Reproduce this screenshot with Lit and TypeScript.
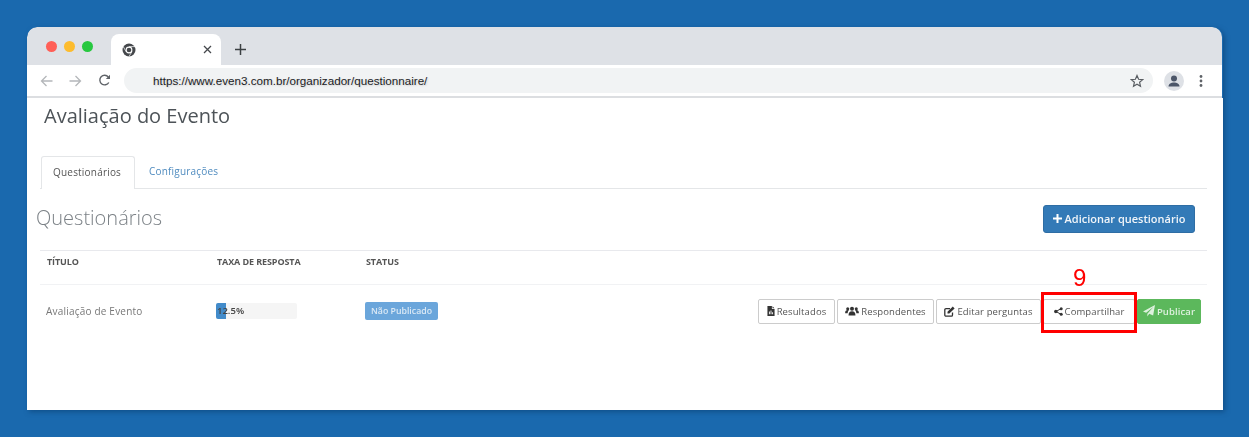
import { LitElement, html, css, svg } from "lit";
import { customElement } from "lit/decorators.js";

const fileIcon = svg`<svg class="ic" width="8" height="10" viewBox="0 0 9 11"><path fill="#333" d="M0.5 0H5.500V3.200H8.500V11H0.500Z"/><path fill="#333" d="M6.200 0.200L8.400 2.500H6.200Z"/><path fill="#fff" d="M2.200 6.200h1v3h-1zM4 5h1v4.200h-1zM5.800 7h1v2.200h-1z"/></svg>`;
const usersIcon = svg`<svg class="ic" width="14" height="10" viewBox="0 0 15 11"><g fill="#333"><circle cx="7.500" cy="3" r="2.200"/><path d="M3.700 10.500c0-3.500 1.300-4.800 3.800-4.800s3.800 1.300 3.800 4.800z"/><circle cx="2.800" cy="3" r="1.700"/><path d="M0 8V7c0-1.500.9-2.600 2.800-2.600.5 0 .9.100 1.200.3-.8.700-1.200 1.800-1.300 3.300z"/><circle cx="12.200" cy="3" r="1.700"/><path d="M15 8V7c0-1.500-.9-2.600-2.800-2.600-.5 0-.9.100-1.200.3.800.7 1.200 1.800 1.300 3.300z"/></g></svg>`;
const editIcon = svg`<svg class="ic" width="11" height="11" viewBox="0 0 11 11"><path fill="none" stroke="#333" stroke-width="1.300" d="M8.500 6.500V9a1.200 1.200 0 0 1-1.200 1.200H2A1.200 1.200 0 0 1 .8 9V3.800A1.200 1.200 0 0 1 2 2.600h4"/><path fill="#333" d="M3.500 5.800L8.800 .6l1.800 1.800L5.300 7.600H3.500z"/></svg>`;
const shareIcon = svg`<svg class="ic" width="9" height="9" viewBox="0 0 9 9"><path stroke="#333" stroke-width="1" fill="none" d="M7 1.700L2 4.500L7 7.300"/><g fill="#333"><circle cx="1.800" cy="4.500" r="1.700"/><circle cx="7.200" cy="1.700" r="1.500"/><circle cx="7.200" cy="7.300" r="1.500"/></g></svg>`;
const planeIcon = svg`<svg class="ic" width="12" height="12" viewBox="0 0 11 11"><path fill="#fff" opacity=".8" d="M11 0L9.300 9.600L5.700 8L4 10.500V8L9.500 1.800L2.900 7.200L0 6Z"/></svg>`;

@customElement("app-root")
export class AppRoot extends LitElement {
  static styles = css`
    :host {
      display: block;
      height: 437px;
      box-sizing: border-box;
      padding: 27px 26px 27px 27px;
      background: #1a69ae;
      font-family: "Open Sans", sans-serif;
      overflow: hidden;
    }
    .window {
      height: 383px;
      border-radius: 10px 10px 0 0;
      box-shadow: 2px 2px 5px rgba(10, 60, 110, 0.55);
      display: flex;
      flex-direction: column;
      overflow: hidden;
    }
    .tabbar {
      height: 38px;
      flex: none;
      background: #dee1e6;
      display: flex;
      align-items: flex-end;
      padding-left: 19px;
      margin-right: 1px;
      border-radius: 10px 10px 0 0;
    }
    .lights {
      display: flex;
      gap: 7px;
      align-self: flex-start;
      margin-top: 14px;
      width: 65px;
    }
    .lights i {
      width: 11px;
      height: 11px;
      border-radius: 50%;
    }
    .red { background: #ff5f57; }
    .yellow { background: #fdbc2e; }
    .green { background: #28c840; }
    .tab {
      width: 110px;
      height: 31px;
      background: #fff;
      border-radius: 8px 8px 0 0;
      display: flex;
      align-items: center;
      justify-content: space-between;
      padding: 0 9px 0 11px;
      box-sizing: border-box;
    }
    .newtab {
      margin: 0 0 10px 14px;
      display: block;
    }
    .toolbar {
      height: 31px;
      flex: none;
      background: #fff;
      display: flex;
      align-items: center;
      padding-left: 13px;
      border-bottom: 2px solid #dcdee1;
      margin-right: 1px;
    }
    .nav {
      display: flex;
      gap: 16px;
      align-items: center;
      width: 84px;
    }
    .omni {
      width: 1029px;
      height: 25px;
      background: #f1f3f4;
      border-radius: 13px;
      display: flex;
      align-items: center;
      justify-content: space-between;
      padding: 0 9px 0 29px;
      box-sizing: border-box;
      font: 11.650px "Liberation Sans", Arial, sans-serif;
      color: #202124;
      text-shadow: 1px 1px 2px rgba(0,0,0,.15);
    }
    .avatar { margin-left: 11px; display: block; }
    .dots { margin-left: 15px; display: block; }
    .page {
      flex: 1;
      background: #fff;
      padding: 0 16px 0 13px;
      position: relative;
      filter: blur(0.35px);
    }
    h1 {
      margin: 4px 0 0 4px;
      font-size: 20px;
      line-height: 27px;
      font-weight: 400;
      color: #4d5358;
    }
    .tabs {
      margin-top: 27px;
      display: flex;
      border-bottom: 1px solid #e4e6e8;
      height: 32px;
      padding-left: 1px;
    }
    .tabs span {
      font-size: 10px;
      line-height: 30px;
      letter-spacing: 0.2px;
      padding: 0 12px 0 11px;
    }
    .tabs .on {
      width: 94px;
      box-sizing: border-box;
      height: 33px;
      background: #fff;
      color: #555;
      border: 1px solid #e4e6e8;
      border-bottom: none;
      border-radius: 3px 3px 0 0;
    }
    .tabs .off { color: #4f8bbf; margin-left: 3px; }
    .head {
      display: flex;
      justify-content: space-between;
      align-items: center;
      margin: 16px 12px 0 -4px;
      height: 28px;
    }
    h2 {
      margin: 0 0 4px;
      font-size: 20px;
      font-weight: 300;
      color: #7b8186;
    }
    .add {
      height: 28px;
      width: 152px;
      box-sizing: border-box;
      background: #337ab7;
      border: 1px solid #2e6da4;
      border-radius: 3px;
      color: #f1f5f9;
      font: 600 11px/24px "Open Sans", sans-serif;
      display: flex;
      align-items: center;
      justify-content: center;
      gap: 3px;
      padding: 0 0 1px;
    }
    .table { margin-top: 17px; }
    .row {
      display: grid;
      grid-template-columns: 170px 149px 1fr auto;
      padding: 0 6px;
      align-items: center;
    }
    .hdr {
      height: 35px;
      box-sizing: border-box;
      border-top: 1px solid #e8e9ed;
      border-bottom: 1px solid #f1f2f4;
      font-size: 9px;
      font-weight: 700;
      letter-spacing: -0.1px;
      color: #555;
      padding: 0 7px 12px;
    }
    .body {
      height: 52px;
      font-size: 10px;
      letter-spacing: 0.2px;
      color: #777;
    }
    .bar {
      width: 81px;
      height: 16px;
      border-radius: 2px;
      background: #f5f5f5;
      position: relative;
      overflow: hidden;
      font-size: 9.500px;
      font-weight: 600;
      line-height: 16px;
      color: #444;
      letter-spacing: 0;
    }
    .fill {
      height: 100%;
      background: #428bca;
    }
    .pct { position: absolute; left: 1px; top: 0; }
    .label {
      display: inline-block;
      background: #6ba6db;
      color: #dbe9f5;
      font-size: 8.750px;
      font-weight: 600;
      line-height: 18px;
      height: 18px;
      padding: 0 6px;
      border-radius: 2px;
      letter-spacing: 0;
    }
    .actions {
      display: flex;
      gap: 2px;
    }
    .btn {
      position: relative;
      height: 25px;
      box-sizing: border-box;
      background: #fff;
      border: 1px solid #ccc;
      border-radius: 2px;
      font: 9.500px "Open Sans", sans-serif;
      letter-spacing: 0.1px;
      color: #555;
      display: flex;
      align-items: center;
      justify-content: center;
      gap: 2px;
      padding: 0;
    }
    .green-btn {
      background: #5cb85c;
      border-color: #5cb85c;
      color: #dff1df;
      font-weight: 600;
    }
    .ic { flex: none; display: block; }
    .mark {
      position: absolute;
      left: -3px;
      top: -8px;
      width: 96px;
      height: 41px;
      box-sizing: border-box;
      border: 3px solid #f00;
    }
    .nine {
      position: absolute;
      left: 29px;
      top: -34px;
      font: 24px/24px "Liberation Sans", Arial, sans-serif;
      color: #f00;
    }
  `;

  render() {
    return html`
      <div class="window">
        <div class="tabbar">
          <div class="lights"><i class="red"></i><i class="yellow"></i><i class="green"></i></div>
          <div class="tab">
            <svg width="14" height="14" viewBox="0 0 14 14">
              <circle cx="7" cy="7" r="6.500" fill="#45484c"/>
              <circle cx="7" cy="7" r="3.400" fill="#fff"/>
              <circle cx="7" cy="7" r="2.300" fill="#45484c"/>
              <path d="M7 3.600H13M4.100 8.700L1.500 4M9.900 8.700L7 13.500" stroke="#fff" stroke-width=".7"/>
            </svg>
            <svg width="9" height="9" viewBox="0 0 9 9"><path d="M1 1L8 8M8 1L1 8" stroke="#45484c" stroke-width="1.300"/></svg>
          </div>
          <svg class="newtab" width="11" height="11" viewBox="0 0 11 11"><path d="M5.500 0V11M0 5.500H11" stroke="#3c4043" stroke-width="1.500"/></svg>
        </div>
        <div class="toolbar">
          <div class="nav">
            <svg width="13" height="12" viewBox="0 0 13 12"><path d="M12.500 6H1.500M6.500 1L1.500 6L6.500 11" fill="none" stroke="#b4b7ba" stroke-width="1.300"/></svg>
            <svg width="13" height="12" viewBox="0 0 13 12"><path d="M.5 6H11.500M6.500 1L11.500 6L6.500 11" fill="none" stroke="#b4b7ba" stroke-width="1.300"/></svg>
            <svg width="13" height="13" viewBox="0 0 13 13"><path d="M10.800 8.500A4.800 4.800 0 1 1 10.300 3" fill="none" stroke="#5f6368" stroke-width="1.400"/><path d="M12 .8V5H7.800Z" fill="#5f6368"/></svg>
          </div>
          <div class="omni">
            <span>https://www.even3.com.br/organizador/questionnaire/</span>
            <svg width="14" height="14" viewBox="0 0 14 14"><path d="M7 1.500L8.600 5.300L12.700 5.600L9.600 8.300L10.500 12.300L7 10.200L3.500 12.300L4.400 8.300L1.300 5.600L5.400 5.300Z" fill="none" stroke="#5a5e63" stroke-width="1.200"/></svg>
          </div>
          <svg class="avatar" width="20" height="20" viewBox="0 0 20 20">
            <circle cx="10" cy="10" r="10" fill="#dee1e6"/>
            <circle cx="10" cy="7.500" r="3" fill="#4c5669"/>
            <path d="M4.500 15.500c0-2.800 2.800-4 5.500-4s5.500 1.200 5.500 4z" fill="#4c5669"/>
          </svg>
          <svg class="dots" width="4" height="12" viewBox="0 0 4 12"><g fill="#5f6368"><circle cx="2" cy="1.500" r="1.400"/><circle cx="2" cy="6" r="1.400"/><circle cx="2" cy="10.500" r="1.400"/></g></svg>
        </div>
        <div class="page">
          <h1>Avaliação do Evento</h1>
          <div class="tabs">
            <span class="on">Questionários</span>
            <span class="off">Configurações</span>
          </div>
          <div class="head">
            <h2>Questionários</h2>
            <button class="add">
              <svg width="9" height="9" viewBox="0 0 9 9"><path d="M4.500 0V9M0 4.500H9" stroke="#fff" stroke-width="2"/></svg>
              Adicionar questionário
            </button>
          </div>
          <div class="table">
            <div class="row hdr">
              <span>TÍTULO</span><span>TAXA DE RESPOSTA</span><span>STATUS</span><span></span>
            </div>
            <div class="row body">
              <span>Avaliação de Evento</span>
              <div class="bar">
                <div class="fill" style="width:12.500%"></div>
                <span class="pct">12.5%</span>
              </div>
              <span><span class="label">Não Publicado</span></span>
              <div class="actions">
                <button class="btn" style="width:77px">${fileIcon}Resultados</button>
                <button class="btn" style="width:97px">${usersIcon}Respondentes</button>
                <button class="btn" style="width:105px">${editIcon}Editar perguntas</button>
                <button class="btn" style="width:92px">${shareIcon}Compartilhar
                  <span class="mark"></span><span class="nine">9</span>
                </button>
                <button class="btn green-btn" style="width:64px">${planeIcon}Publicar</button>
              </div>
            </div>
          </div>
        </div>
      </div>
    `;
  }
}
